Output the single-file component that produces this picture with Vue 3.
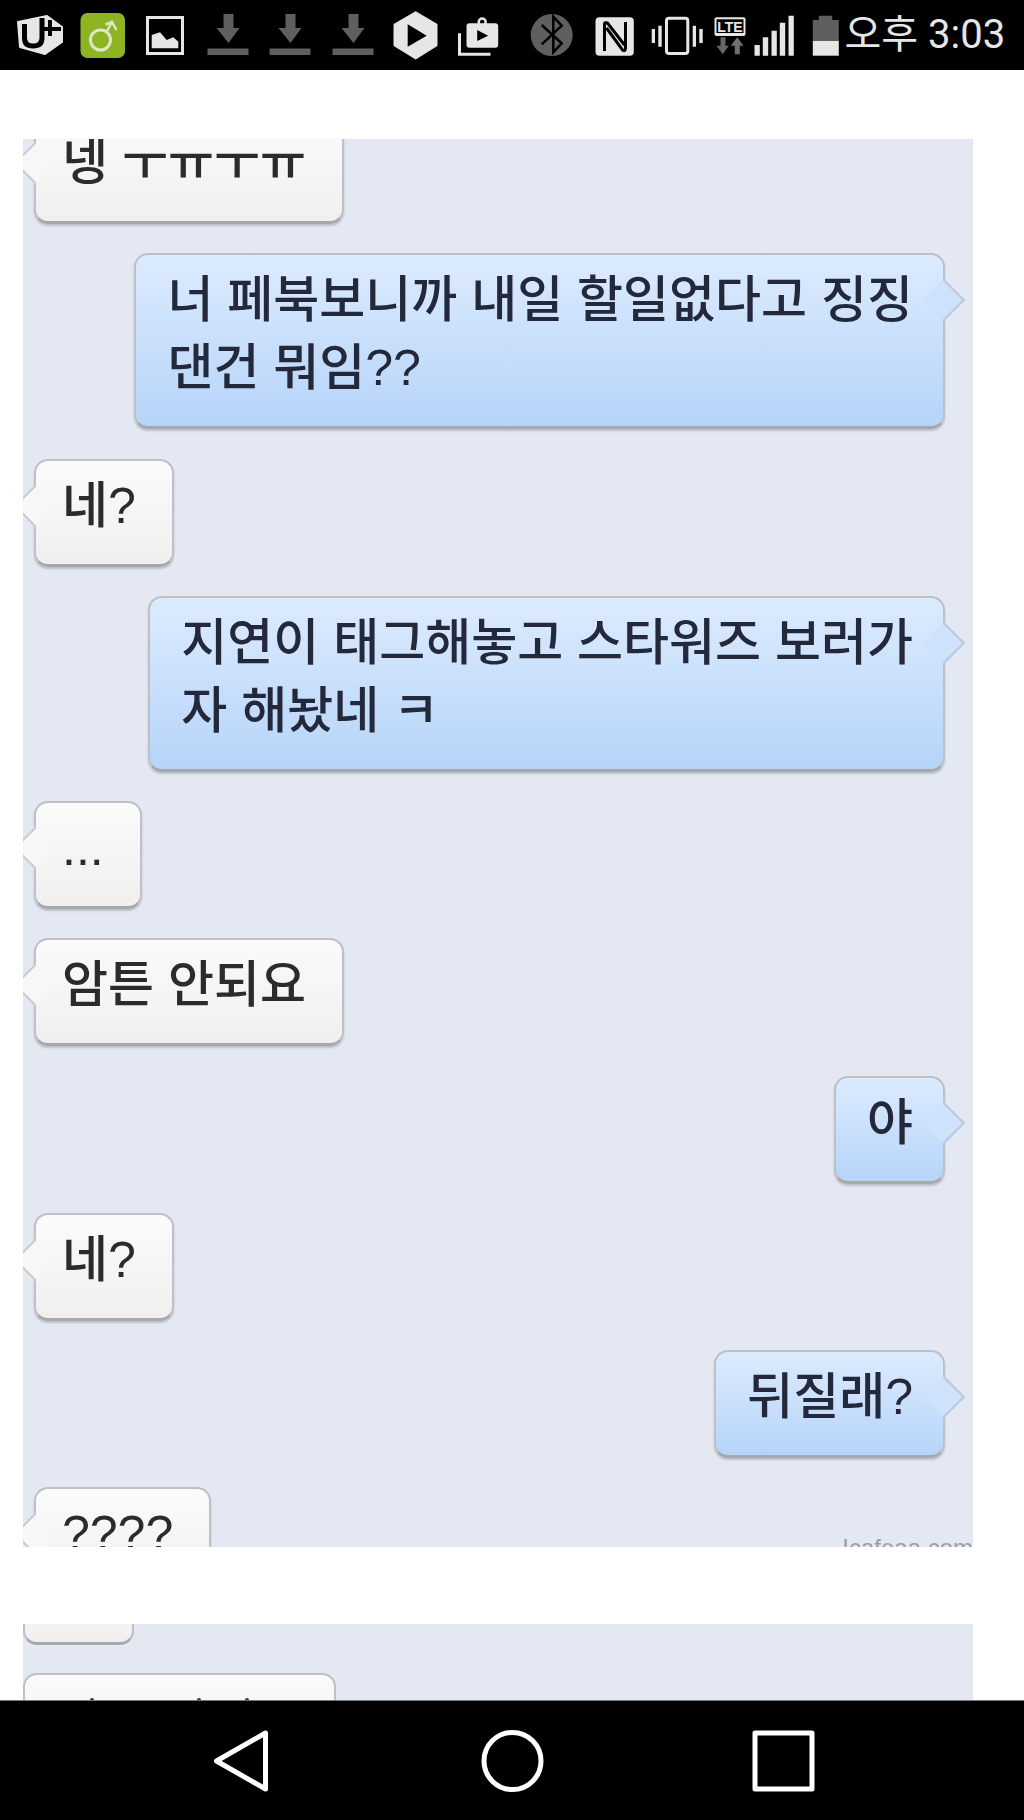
<template>
  <div class="page">
    <header class="status">
      <!-- carrier -->
      <svg width="62.5" height="70" viewBox="9 0 62.5 70">
        <path d="M18 22 47 16 62 27V42L45 54 20 47Z" fill="#e6e6e6" stroke="#e6e6e6" stroke-width="2" stroke-linejoin="round" />
        <path d="M24.5 24V38Q24.5 46 33 46 42 46 42 38V18" fill="none" stroke="#000" stroke-width="5" />
        <path d="M50 20V36M44 29H61" fill="none" stroke="#000" stroke-width="4" />
      </svg>
      <svg width="62.5" height="70" viewBox="71.5 0 62.5 70">
        <rect x="80" y="13" width="44.5" height="45" rx="7" fill="#8cb423" />
        <circle cx="100" cy="40" r="10" fill="none" stroke="#dfe6c8" stroke-width="3" />
        <path d="M106.5 31 111.5 22 116 30M105 24.500 111.500 22" fill="none" stroke="#dfe6c8" stroke-width="2.500" />
      </svg>
      <svg width="62.5" height="70" viewBox="134 0 62.5 70">
        <rect x="147.500" y="17.500" width="35" height="36" fill="none" stroke="#e6e6e6" stroke-width="3" />
        <path d="M151.700 35 160 32.300 166.700 40 173.300 37.300 178.300 41.700V48.300H151.700Z" fill="#e6e6e6" />
      </svg>
      <svg v-for="n in 3" :key="n" width="62.5" height="70" viewBox="196.5 0 62.5 70">
        <path d="M223 14H233V28H239L228 43 216 28H223Z" fill="#5f5f5f" />
        <rect x="207" y="48.500" width="41" height="6.500" fill="#5f5f5f" />
      </svg>
      <svg width="62.5" height="70" viewBox="384 0 62.5 70">
        <path d="M415.700 11.700 437 24.300V45.700L415.700 59 394 45.700V24.300Z" fill="#e6e6e6" stroke="#e6e6e6" stroke-width="1" stroke-linejoin="round" />
        <path d="M407.700 24.300 426.700 35.700 407.700 46.700Z" fill="#000" />
      </svg>
      <svg width="62.5" height="70" viewBox="446.5 0 62.5 70">
        <circle cx="481.700" cy="22" r="3.500" fill="none" stroke="#e6e6e6" stroke-width="2.500" />
        <rect x="466" y="23.300" width="31.700" height="24.400" rx="3" fill="#e6e6e6" />
        <path d="M476.700 30 487.700 35.700 476.700 41Z" fill="#000" />
        <path d="M459 33.300V54.300H490" fill="none" stroke="#e6e6e6" stroke-width="3" />
      </svg>

      <svg class="first-right" width="62.5" height="70" viewBox="521 0 62.5 70">
        <circle cx="551.700" cy="35" r="21" fill="#5f5f5f" />
        <path d="M541.700 25 561.700 43.300 553.300 52.300V16.700L561.700 25.700 541.700 44.300" fill="none" stroke="#000" stroke-width="2.500" />
      </svg>
      <svg width="62.5" height="70" viewBox="583.5 0 62.5 70">
        <rect x="595" y="17.300" width="38.300" height="38.400" rx="4" fill="#e6e6e6" />
        <path d="M604 51V24Q604 22 607 23L624 45M625 22V48Q625 52 622 50L606 28" fill="none" stroke="#000" stroke-width="3" />
      </svg>
      <svg width="62.5" height="70" viewBox="646 0 62.5 70">
        <rect x="666.500" y="18.200" width="21.300" height="35.300" rx="2.500" fill="none" stroke="#e6e6e6" stroke-width="3" />
        <path d="M651.700 29H655V43H651.700ZM658.300 25.700H661.700V46.700H658.300ZM692.700 25.700H696V46.700H692.700ZM699.300 29H702.700V43H699.300Z" fill="#e6e6e6" />
      </svg>
      <svg width="43" height="70" viewBox="708.5 0 43 70">
        <rect x="714" y="17.300" width="31" height="18.700" rx="2" fill="#e6e6e6" />
        <rect x="716" y="19.300" width="27" height="13.700" fill="#000" />
        <text x="729.500" y="31.500" text-anchor="middle" class="lte">LTE</text>
        <path d="M720 37.300H725V45.700H728.300L722.300 54.300 716 45.700H720Z" fill="#666" />
        <path d="M736.700 37.300 743 45.700H739.300V54.300H734.300V45.700H730.300Z" fill="#707070" />
      </svg>
      <svg width="45" height="70" viewBox="751.5 0 45 70">
        <path d="M754 45H759.300V55.700H754ZM762.300 37.300H767.700V55.700H762.300ZM771 30.700H776.300V55.700H771ZM779.300 22.700H784.700V55.700H779.300ZM788 15.700H793.300V55.700H788Z" fill="#e6e6e6" />
      </svg>
      <svg width="46" height="70" viewBox="796.5 0 46 70">
        <path d="M818.300 15.700H831.700V20H838.300V41H812.300V20H818.300Z" fill="#5f5f5f" />
        <rect x="812.300" y="41" width="26" height="14.700" fill="#e6e6e6" />
      </svg>
      <span class="clock">오후 3:03</span>
    </header>

    <main class="chat first">
      <div v-for="m in messages" :key="m.id" class="bubble" :class="[m.mine ? 'mine' : 'theirs', m.extra]">{{ m.text }}</div>
      <span class="mark">Icafeaa.com</span>
    </main>

    <section class="chat second">
      <div class="stub one"></div>
      <div class="stub two">
        <i class="tick"></i>
        <i class="tick"></i>
        <i class="tick"></i>
      </div>
    </section>

    <footer class="nav">
      <svg width="271" height="120" viewBox="-135.5 -60 271 120">
        <path d="M24-28V28L-25 0Z" fill="none" stroke="#fff" stroke-width="5" stroke-linejoin="round" />
      </svg>
      <svg width="271" height="120" viewBox="-135.5 -60 271 120">
        <circle r="28.500" fill="none" stroke="#fff" stroke-width="5" />
      </svg>
      <svg width="271" height="120" viewBox="-135.5 -60 271 120">
        <rect x="-28.500" y="-28" width="57" height="56" fill="none" stroke="#fff" stroke-width="5" stroke-linejoin="round" />
      </svg>
    </footer>
  </div>
</template>

<script setup>
const messages = [
  { id: 1, text: '넹 ㅜㅠㅜㅠ', mine: false, extra: 'cut' },
  { id: 2, text: '너 페북보니까 내일 할일없다고 징징\n댄건 뭐임??', mine: true },
  { id: 3, text: '네?', mine: false },
  { id: 4, text: '지연이 태그해놓고 스타워즈 보러가\n자 해놨네 ㅋ', mine: true },
  { id: 5, text: '...', mine: false },
  { id: 6, text: '암튼 안되요', mine: false },
  { id: 7, text: '야', mine: true },
  { id: 8, text: '네?', mine: false },
  { id: 9, text: '뒤질래?', mine: true },
  { id: 10, text: '????', mine: false }
]
</script>

<style>
html,
body {
  margin: 0;
  background: #fff;
}
</style>

<style scoped>
.page {
  display: flex;
  flex-direction: column;
  width: 1024px;
  height: 1820px;
  overflow: hidden;
  background: #fff;
  font-family: "Liberation Sans", "Noto Sans CJK KR", sans-serif;
}
.status {
  display: flex;
  align-items: center;
  flex: none;
  height: 70px;
  padding-left: 9px;
  background: #000;
}
.status svg {
  flex: none;
}
.first-right {
  margin-left: 12px;
}
.lte {
  font-size: 14px;
  font-weight: 700;
  fill: #e6e6e6;
}
.clock {
  margin-left: 2px;
  font-family: Roboto, "Noto Sans CJK KR", sans-serif;
  font-size: 40px;
  line-height: 70px;
  white-space: nowrap;
  color: #e6e6e6;
}
.chat {
  position: relative;
  flex: none;
  width: 950px;
  margin-left: 23px;
  overflow: hidden;
  background: #e4e8f3;
}
.chat.first {
  display: flex;
  flex-direction: column;
  gap: 29.25px;
  height: 1408px;
  margin-top: 69px;
}
.chat.second {
  height: 76px;
  margin-top: 77px;
}
.bubble {
  position: relative;
  box-sizing: border-box;
  padding: 11px 30px 24px 31px;
  border: 2px solid #bfc0c5;
  border-bottom: 3px solid #a6a8ae;
  border-radius: 14px;
  box-shadow: 0 2px 2px rgba(0, 0, 0, 0.18);
  font-size: 50px;
  font-weight: 500;
  line-height: 68px;
  white-space: pre-line;
  filter: blur(0.5px);
}
.bubble::after {
  content: "";
  position: absolute;
  top: 30px;
  width: 28px;
  height: 28px;
  transform: rotate(45deg);
}
.theirs {
  align-self: flex-start;
  margin-left: 11px;
  padding-left: 26px;
  padding-right: 36px;
  background: linear-gradient(#fbfbfb, #f1eeee);
  color: #2b2b2d;
}
.theirs::after {
  left: -16px;
  background: #f8f7f7;
  border-left: 2px solid #c9c9cd;
  border-bottom: 2px solid #c9c9cd;
}
.mine {
  align-self: flex-end;
  margin-right: 28px;
  background: linear-gradient(#dcebfe, #b6d4f9);
  color: #23283a;
}
.mine::after {
  right: -16px;
  background: #cfe2fb;
  border-right: 2px solid #bcc8da;
  border-top: 2px solid #bcc8da;
}
.cut {
  margin-top: -23px;
}
.mark {
  position: absolute;
  right: 0;
  bottom: -15px;
  font-size: 24px;
  color: #9a9ca4;
  filter: blur(0.5px);
}
.stub {
  position: absolute;
  box-sizing: border-box;
  border: 2px solid #bfc0c5;
  border-bottom: 3px solid #a6a8ae;
  background: linear-gradient(#fbfbfb, #f1eeee);
}
.stub.one {
  top: -40px;
  left: 0;
  width: 111px;
  height: 61px;
  border-radius: 0 0 14px 14px;
}
.stub.two {
  top: 49px;
  left: 0;
  display: flex;
  width: 313px;
  height: 80px;
  padding: 23px 0 0 65px;
  border-radius: 14px 14px 0 0;
}
.tick {
  width: 4px;
  height: 4px;
  border-radius: 2px;
  background: #33343a;
}
.tick:nth-child(2) {
  margin-left: 103px;
}
.tick:nth-child(3) {
  margin-left: 44px;
}
.nav {
  display: flex;
  justify-content: center;
  flex: none;
  height: 120px;
  box-sizing: border-box;
  border-top: 1px solid #777;
  background: #000;
}
</style>
